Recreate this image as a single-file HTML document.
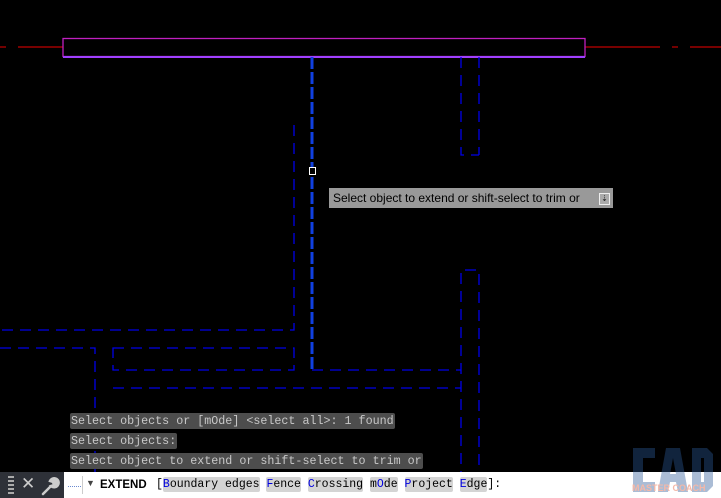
<!DOCTYPE html>
<html><head><meta charset="utf-8"><style>
body{margin:0;width:721px;height:498px;background:#000;position:relative;overflow:hidden;font-family:"Liberation Sans",sans-serif}
.a{position:absolute}
.h{position:absolute;left:70px;height:16px;background:#4d4d4d;color:#c8c8c8;font:11.7px/16px "Liberation Mono",monospace;padding:0 1px;border-radius:2px;white-space:pre}
.o{background:#d4d4d4;border-radius:2px;padding:1px 0}
.b{color:#0000e0}
</style></head><body>
<svg class="a" style="left:0;top:0" width="721" height="498">
<g stroke="#c00000" stroke-width="1.2">
<line x1="0" y1="47" x2="6" y2="47"/><line x1="18" y1="47" x2="63" y2="47"/>
<line x1="585" y1="47" x2="660" y2="47"/><line x1="672" y1="47" x2="678" y2="47"/><line x1="690" y1="47" x2="721" y2="47"/>
</g>
<rect x="63" y="38.5" width="522" height="18" fill="none" stroke="#c020c0" stroke-width="1.3"/>
<line x1="63" y1="57" x2="585" y2="57" stroke="#a040ff" stroke-width="2"/>
<g stroke="#0000e6" stroke-width="1.3" fill="none" stroke-dasharray="11,7">
<polyline points="294,125 294,330 0,330"/>
<polyline points="461,57 461,155 479,155"/>
<line x1="479" y1="57" x2="479" y2="155"/>
<polyline points="461,500 461,270 479,270 479,500"/>
<polyline points="0,348 95,348 95,498"/>
<rect x="113" y="348" width="181" height="22"/>
<line x1="312" y1="370" x2="461" y2="370"/>
<line x1="113" y1="388" x2="461" y2="388"/>
</g>
<line x1="312" y1="57" x2="312" y2="370" stroke="#1040e0" stroke-width="3" stroke-dasharray="12,3"/>
<rect x="309.5" y="167.5" width="6" height="7" fill="#000" stroke="#fff" stroke-width="1"/>
</svg>
<div class="a" style="left:329px;top:188px;width:284px;height:20px;background:#999"></div>
<div class="a" style="left:333px;top:189px;font-size:12px;line-height:18px;color:#000">Select object to extend or shift-select to trim or</div>
<div class="a" style="left:599px;top:193px;width:9px;height:10px;border:1px solid #eee;background:#aaa;font-size:8px;line-height:10px;text-align:center;color:#222">⇣</div>
<div class="h" style="top:413px">Select objects or [mOde] &lt;select all&gt;: 1 found</div>
<div class="h" style="top:433px">Select objects:</div>
<div class="h" style="top:453px">Select object to extend or shift-select to trim or</div>
<div class="a" style="left:0;top:472px;width:64px;height:26px;background:#2e3138"></div>
<div class="a" style="left:8px;top:476px;width:6px;height:19px;background:repeating-linear-gradient(#aaa 0 2px,transparent 2px 4px)"></div>
<div class="a" style="left:21px;top:474px;color:#ccc;font-size:17px">✕</div>
<svg class="a" style="left:40px;top:476px" width="20" height="20" viewBox="0 0 20 20"><path d="M3 18 L11 10 M11 10 a4.5 4.5 0 1 0 -1 -5 l3 1 1 3 -3 1z" stroke="#ccc" stroke-width="2.5" fill="#ccc" stroke-linecap="round"/></svg>
<div class="a" style="left:64px;top:472px;width:657px;height:26px;background:#fff"></div>
<div class="a" style="left:68px;top:486px;width:13px;border-top:1px dotted #6a8ad0"></div>
<div class="a" style="left:82px;top:476px;width:1px;height:18px;background:#ccc"></div>
<div class="a" style="left:86px;top:478px;font-size:9px;color:#444">▼</div>
<div class="a" style="left:100px;top:477px;font:bold 11.5px/16px 'Liberation Sans',sans-serif;color:#000">EXTEND</div>
<div class="a" style="left:156px;top:477px;font:11.5px/16px 'Liberation Mono',monospace;color:#000;white-space:pre">[<span class="o"><span class="b">B</span>oundary edges</span> <span class="o"><span class="b">F</span>ence</span> <span class="o"><span class="b">C</span>rossing</span> <span class="o">m<span class="b">O</span>de</span> <span class="o"><span class="b">P</span>roject</span> <span class="o"><span class="b">E</span>dge</span>]:</div>
<svg class="a" style="left:0;top:0;opacity:0.4" width="721" height="498">
<g fill="#2c5a98">
<path d="M633 448 h22 v10 h-12 v24 h12 v10 h-22z"/>
<path d="M658 492 l8 -44 h14 l8 44 h-10 l-2 -10 h-6 l-2 10z M670 474 h6 l-3 -16z"/>
<path d="M692 448 h15 l6 6 v32 l-6 6 h-15z M701 458 v24 h3 v-24z"/>
</g>
</svg>
<div class="a" style="left:632px;top:483px;font:bold 9px 'Liberation Sans',sans-serif;color:#f4b8a8">MASTER COACH</div>
</body></html>
